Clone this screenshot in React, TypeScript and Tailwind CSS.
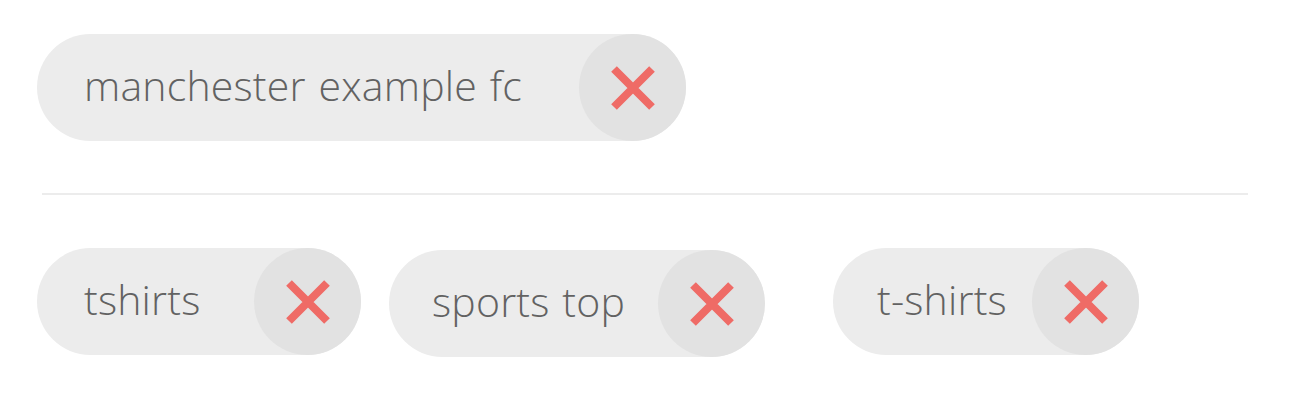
import React from "react";

function XIcon() {
  return (
    <svg width="46" height="46" viewBox="0 0 46 46" fill="none">
      <path d="M4 4 L42 42 M42 4 L4 42" stroke="#ef6b66" strokeWidth="8" />
    </svg>
  );
}

function Pill({ label, widthClass, extra = "", padClass = "pl-[47px]" }: { label: string; widthClass: string; extra?: string; padClass?: string }) {
  return (
    <div className={`flex h-[107px] items-center justify-between rounded-full bg-[#ececec] ${widthClass} ${extra}`}>
      <span className={`${padClass} pb-[4px] text-[41px] font-light leading-none tracking-[0.2px] text-[#626262] [word-spacing:2px]`} style={{ fontFamily: "'Open Sans', Lato, sans-serif" }}>
        {label}
      </span>
      <div className="flex h-[107px] w-[107px] shrink-0 items-center justify-center rounded-full bg-[#e2e2e2]">
        <XIcon />
      </div>
    </div>
  );
}

export default function App() {
  return (
    <div className="min-h-[418px] w-[1301px] bg-white pl-[37px] pt-[34px]">
      <Pill label="manchester example fc" widthClass="w-[649px]" />
      <div className="ml-[5px] mt-[52px] h-[2px] w-[1206px] bg-[#ececec]" />
      <div className="mt-[53px] flex items-start">
        <Pill label="tshirts" widthClass="w-[324px]" />
        <Pill label="sports top" widthClass="w-[376px]" extra="ml-[28px] mt-[2px]" padClass="pl-[43px]" />
        <Pill label="t-shirts" widthClass="w-[306px]" extra="ml-[68px]" padClass="pl-[44px]" />
      </div>
    </div>
  );
}
